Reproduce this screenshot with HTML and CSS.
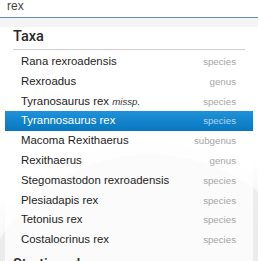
FILE: index.html
```html
<!DOCTYPE html>
<html>
<head>
<meta charset="utf-8">
<link rel="stylesheet" href="styles.css">
</head>
<body>
<div class="search"><span class="query">rex</span></div>
<div class="band"></div>
<div class="dropdown">
  <h2 class="section">Taxa</h2>
  <ul class="results">
    <li class="row"><span class="name">Rana rexroadensis</span><span class="rank">species</span></li>
    <li class="row"><span class="name">Rexroadus</span><span class="rank">genus</span></li>
    <li class="row"><span class="name">Tyranosaurus rex <em class="note">missp.</em></span><span class="rank">species</span></li>
    <li class="row active"><span class="name">Tyrannosaurus rex</span><span class="rank">species</span></li>
    <li class="row"><span class="name">Macoma Rexithaerus</span><span class="rank">subgenus</span></li>
    <li class="row"><span class="name">Rexithaerus</span><span class="rank">genus</span></li>
    <li class="row"><span class="name">Stegomastodon rexroadensis</span><span class="rank">species</span></li>
    <li class="row"><span class="name">Plesiadapis rex</span><span class="rank">species</span></li>
    <li class="row"><span class="name">Tetonius rex</span><span class="rank">species</span></li>
    <li class="row"><span class="name">Costalocrinus rex</span><span class="rank">species</span></li>
  </ul>
  <h2 class="section next">Stratigraphy</h2>
</div>
</body>
</html>
```
FILE: styles.css
```css
html, body {
  margin: 0;
  padding: 0;
}
body {
  width: 258px;
  height: 261px;
  overflow: hidden;
  font-family: "Liberation Sans", Arial, sans-serif;
  color: #222;
  background-color: #fff;
  background-image: radial-gradient(circle at 150px 330px, #e9e9e9 0, #ececec 175px, #f8f8f8 176px, #ffffff 200px);
}
.search {
  height: 17px;
  background: #fff;
  border-bottom: 1px solid #5b8fc6;
  padding-left: 7px;
  font-size: 12px;
  line-height: 13px;
  color: #444;
}
.band {
  height: 9px;
  background: #f4f4f4;
}
.dropdown {
  margin: 0 5px;
  background: rgba(255, 255, 255, 0.8);
}
.section {
  margin: 0 8px;
  padding: 0 0 2px;
  border-bottom: 1px solid #cfcfcf;
  font-family: Roboto, "Liberation Sans", sans-serif;
  font-size: 14.5px;
  line-height: 20px;
  font-weight: 500;
  color: #2a2a2a;
}
.section.next {
  margin-top: 5px;
}
.results {
  list-style: none;
  margin: 2px 0 0;
  padding: 0;
}
.row {
  display: flex;
  justify-content: space-between;
  align-items: baseline;
  height: 19.8px;
  line-height: 19.8px;
  padding: 0 17px 0 16px;
  font-size: 11.4px;
  color: #222;
}
.rank {
  font-size: 9.7px;
  color: #a6a6a6;
}
.note {
  font-size: 9.7px;
  color: #333;
}
.row.active {
  background: linear-gradient(#1f92d8, #0877bf);
  color: #fff;
}
.row.active .rank {
  color: #b3d3ec;
}
```
